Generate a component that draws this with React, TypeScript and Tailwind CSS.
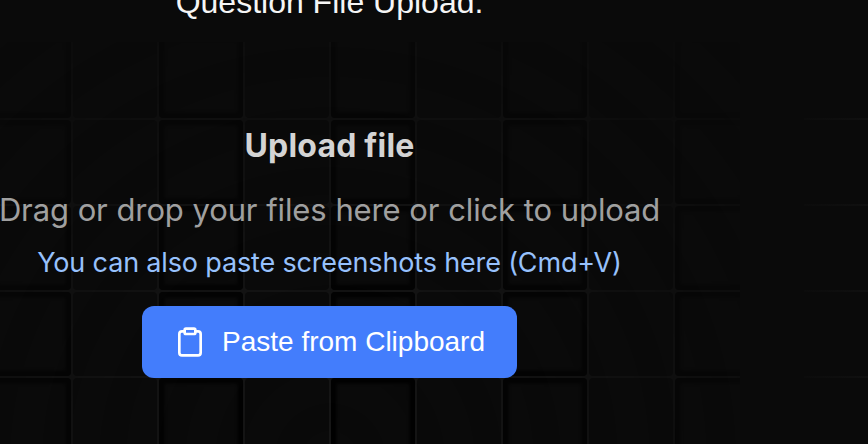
import { Clipboard } from 'lucide-react';

const rows = Array.from({ length: 5 });
const columns = Array.from({ length: 9 });

function GridPattern() {
  return (
    <div className="absolute left-0 top-[42px] h-[402px] w-[740px] overflow-hidden bg-[#171717] [mask-image:radial-gradient(580px_590px_at_330px_418px,white,transparent)]">
      <div className="-ml-[13px] -mt-2 grid w-[772px] grid-cols-[repeat(9,84px)] gap-0.5">
        {rows.map((_, row) =>
          columns.map((_, column) => (
            <div
              key={`${row}-${column}`}
              className={`h-[84px] rounded bg-[#0a0a0a] ${column % 2 === 0 ? 'shadow-[inset_0_0_3px_5.5px_#000]' : ''}`}
            />
          )),
        )}
      </div>
    </div>
  );
}

function SideGrid() {
  return (
    <div className="absolute left-[804px] top-[118px] flex w-16 flex-col gap-[84px]">
      {[0, 1, 2, 3].map((line) => (
        <div key={line} className="h-0.5 bg-linear-to-r from-[#0c0c0c] to-[#101010]" />
      ))}
    </div>
  );
}

export default function App() {
  return (
    <main className="relative h-[444px] w-[868px] overflow-hidden bg-[#0a0a0a] font-['Liberation_Sans',Arial,sans-serif]">
      <GridPattern />
      <SideGrid />
      <div className="relative flex w-[659px] flex-col items-center whitespace-nowrap">
        <h1 className="-mt-5 h-11 text-[32px] leading-[44px] text-[#f5f5f5]">Question File Upload.</h1>
        <h2 className="mt-[97px] font-['Inter',sans-serif] text-[32px] font-bold leading-[49px] tracking-[0.2px] text-[#d4d4d4]">Upload file</h2>
        <p className="mt-[15px] font-['Inter',sans-serif] text-[31px] leading-[49px] tracking-[-0.14px] [word-spacing:0.3px] text-[#a0a0a0]">
          Drag or drop your files here or click to upload
        </p>
        <p className="mt-2 font-['Inter',sans-serif] text-[27px] leading-[42px] tracking-[-0.16px] text-[#97c1fc]">
          You can also paste screenshots here (Cmd+V)
        </p>
        <button className="mt-[22px] flex h-[72px] w-[375px] items-center gap-4 rounded-xl bg-[#437dfc] px-8 text-[28px] leading-10 text-white">
          <Clipboard size={32} strokeWidth={2} className="shrink-0" />
          <span>Paste from Clipboard</span>
        </button>
      </div>
    </main>
  );
}
